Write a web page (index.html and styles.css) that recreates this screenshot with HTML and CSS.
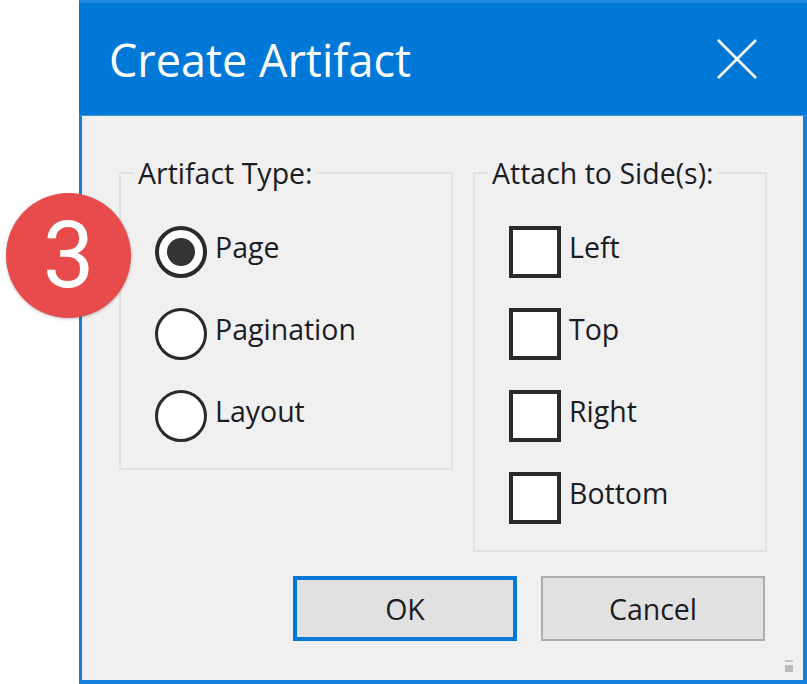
FILE: index.html
```html
<!DOCTYPE html>
<html lang="en">
<head>
<meta charset="utf-8">
<title>Create Artifact</title>
<link rel="stylesheet" href="styles.css">
</head>
<body>
<div class="badge">3</div>
<div class="window">
  <header class="titlebar">
    <h1 class="title">Create Artifact</h1>
    <svg class="close" width="40" height="40" viewBox="0 0 40 40" aria-hidden="true"><path d="M1 1L39 39M39 1L1 39" fill="none" stroke="#fff" stroke-width="2.6"/></svg>
  </header>
  <main class="content">
    <div class="groups">
      <fieldset class="group group-type">
        <legend class="legend">Artifact Type:</legend>
        <div class="option"><span class="radio radio-on"></span><span class="label">Page</span></div>
        <div class="option"><span class="radio"></span><span class="label">Pagination</span></div>
        <div class="option"><span class="radio"></span><span class="label">Layout</span></div>
      </fieldset>
      <fieldset class="group group-side">
        <legend class="legend">Attach to Side(s):</legend>
        <div class="option"><span class="check"></span><span class="label">Left</span></div>
        <div class="option"><span class="check"></span><span class="label">Top</span></div>
        <div class="option"><span class="check"></span><span class="label">Right</span></div>
        <div class="option"><span class="check"></span><span class="label">Bottom</span></div>
      </fieldset>
    </div>
    <div class="actions">
      <button class="btn btn-default" type="button">OK</button>
      <button class="btn" type="button">Cancel</button>
    </div>
  </main>
  <div class="grip"><span class="grip-line"></span><span class="grip-block"></span></div>
</div>
</body>
</html>
```
FILE: styles.css
```css
* { box-sizing: border-box; }
html, body { margin: 0; padding: 0; }
body {
  width: 807px;
  height: 684px;
  background: #fff;
  overflow: hidden;
  position: relative;
  font-family: "Open Sans", "Noto Sans", sans-serif;
  color: #1c1c24;
}
.window {
  position: relative;
  margin-left: 79px;
  width: 728px;
  height: 684px;
  border: solid #1580dc;
  border-width: 0 4px 4px 3px;
  background: #f0f0f0;
  display: flex;
  flex-direction: column;
}
.titlebar {
  height: 116px;
  margin: 0 -4px 0 -3px;
  padding: 0 50px 0 31px;
  background: #0078d7;
  border-top: 3px solid #1f87de;
  border-bottom: 1px solid #3a95e2;
  display: flex;
  align-items: center;
  justify-content: space-between;
}
.title {
  margin: 2px 0 0 -1px;
  font-size: 45px;
  font-weight: 400;
  line-height: 60px;
  color: #fff;
}
.close { margin-top: -1px; }
.content {
  flex: 1;
  padding: 39px 36px 0 37px;
}
.groups {
  display: flex;
  align-items: flex-start;
  gap: 20px;
}
.group {
  margin: 0;
  padding: 0 0 0 34px;
  border: 2px solid #e2e2e2;
  min-width: 0;
}
.group-type { width: 334px; height: 315px; }
.group-side { width: 294px; height: 397px; }
.legend {
  margin-left: -21px;
  padding: 0 4px;
  font-size: 28.5px;
  line-height: 36px;
  white-space: nowrap;
}
.option {
  display: flex;
  align-items: flex-start;
  gap: 8px;
  height: 52px;
  margin-bottom: 30px;
}
.group > .legend + .option { margin-top: 35px; }
.label {
  font-size: 28.5px;
  line-height: 36px;
  margin-top: 3px;
}
.radio {
  flex: none;
  width: 52px;
  height: 52px;
  border: 3px solid #2a2a2a;
  border-radius: 50%;
  background: #fff;
  display: flex;
  align-items: center;
  justify-content: center;
}
.radio-on { border-width: 4px; }
.radio-on::after {
  content: "";
  width: 28px;
  height: 28px;
  border-radius: 50%;
  background: #333;
}
.check {
  flex: none;
  width: 52px;
  height: 52px;
  border: 4px solid #2a2a2a;
  background: #fff;
}
.actions {
  display: flex;
  justify-content: flex-end;
  gap: 24px;
  margin-top: 24px;
  padding-right: 2px;
}
.btn {
  width: 224px;
  height: 65px;
  padding: 0;
  background: #e1e1e1;
  border: 2px solid #adadad;
  font: inherit;
  font-size: 28.5px;
  color: #1c1c24;
}
.btn-default { border: 4px solid #0078d7; }
.grip {
  position: absolute;
  right: 10px;
  bottom: 8px;
  width: 8px;
  display: flex;
  flex-direction: column;
  gap: 3px;
}
.grip-line { height: 2px; background: #c4c4c4; }
.grip-block { height: 7px; background: #bcbcbc; }
.badge {
  position: absolute;
  z-index: 2;
  left: 6px;
  top: 193px;
  width: 125px;
  height: 125px;
  border-radius: 50%;
  background: #e84b4b;
  box-shadow: 0 1px 3px rgba(0,0,0,.25);
  color: #fff;
  font-family: Roboto, sans-serif;
  font-size: 92px;
  line-height: 125px;
  text-align: center;
}
```
